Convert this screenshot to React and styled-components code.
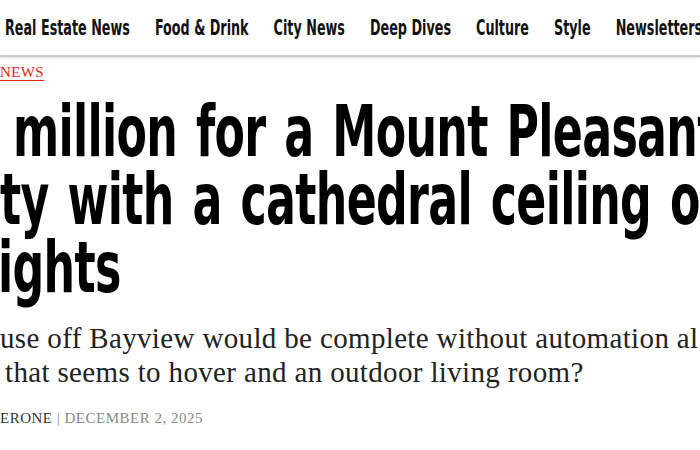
import React from "react";
import styled, { createGlobalStyle } from "styled-components";

const GlobalStyle = createGlobalStyle`
  html, body {
    margin: 0;
    padding: 0;
    background: #fff;
  }
`;

const condensed = `"DejaVu Sans Condensed", "Liberation Sans", sans-serif`;
const serif = `"Liberation Serif", "DejaVu Serif", serif`;

const NAV_SCALE = 0.645;
const HEAD_SCALE = 0.684;

const navItems = [
  "Real Estate News",
  "Food & Drink",
  "City News",
  "Deep Dives",
  "Culture",
  "Style",
  "Newsletters",
];

const App = () => {
  return (
    <>
      <GlobalStyle />
      <Page>
        <NavBar>
          <NavList>
            {navItems.map((item) => (
              <NavItem key={item}>{item}</NavItem>
            ))}
          </NavList>
        </NavBar>
        <Article>
          <Kicker>NEWS</Kicker>
          <Headline>
            <HeadLine $indent={13}>million for a Mount Pleasant</HeadLine>
            <HeadLine $indent={0}>ty with a cathedral ceiling of</HeadLine>
            <HeadLine $indent={-2}>ights</HeadLine>
          </Headline>
          <Dek>
            <DekLine $indent={0}>use off Bayview would be complete without automation al</DekLine>
            <DekLine $indent={5}>that seems to hover and an outdoor living room?</DekLine>
          </Dek>
          <Byline>
            <Author>ERONE</Author>
            <Meta> | DECEMBER 2, 2025</Meta>
          </Byline>
        </Article>
      </Page>
    </>
  );
};

export default App;

const Page = styled.div`
  width: 700px;
  height: 450px;
  overflow: hidden;
  background: #fff;
  color: #000;
`;

const NavBar = styled.nav`
  height: 55px;
  display: flex;
  align-items: center;
  border-bottom: 2px solid #c9c9c9;
  box-shadow: 0 1px 2px rgba(0, 0, 0, 0.12);
  padding-left: 5px;
  white-space: nowrap;
`;

const NavList = styled.div`
  display: flex;
  align-items: center;
  gap: ${25 / NAV_SCALE}px;
  transform: scaleX(${NAV_SCALE});
  transform-origin: left center;
`;

const NavItem = styled.a`
  font-family: ${condensed};
  font-weight: 700;
  font-size: 22px;
  line-height: 22px;
  color: #111;
  text-decoration: none;
`;

const Article = styled.article`
  display: flex;
  flex-direction: column;
  white-space: nowrap;
`;

const Kicker = styled.a`
  align-self: flex-start;
  margin-top: 5px;
  font-family: ${serif};
  font-size: 15px;
  line-height: 20px;
  letter-spacing: 0.4px;
  color: #e2261c;
  text-decoration: underline;
  text-decoration-thickness: 1px;
  text-underline-offset: 3px;
`;

const Headline = styled.h1`
  margin: 15px 0 0;
  font-family: ${condensed};
  font-weight: 700;
  font-size: 72px;
  line-height: 68px;
  letter-spacing: -1px;
  word-spacing: 6px;
  color: #000;
  transform: scaleX(${HEAD_SCALE});
  transform-origin: left top;
`;

const HeadLine = styled.span`
  display: block;
  padding-left: ${({ $indent }) => Math.max($indent, 0) / HEAD_SCALE}px;
  margin-left: ${({ $indent }) => Math.min($indent, 0) / HEAD_SCALE}px;
`;

const Dek = styled.p`
  margin: 20px 0 0;
  font-family: ${serif};
  font-size: 29px;
  line-height: 34px;
  letter-spacing: 0.35px;
  color: #222;
`;

const DekLine = styled.span`
  display: block;
  padding-left: ${({ $indent }) => $indent}px;
`;

const Byline = styled.div`
  margin-top: 19px;
  font-family: ${serif};
  font-size: 15px;
  line-height: 20px;
  letter-spacing: 0.5px;
`;

const Author = styled.span`
  color: #333;
`;

const Meta = styled.span`
  color: #8a8a8a;
`;
